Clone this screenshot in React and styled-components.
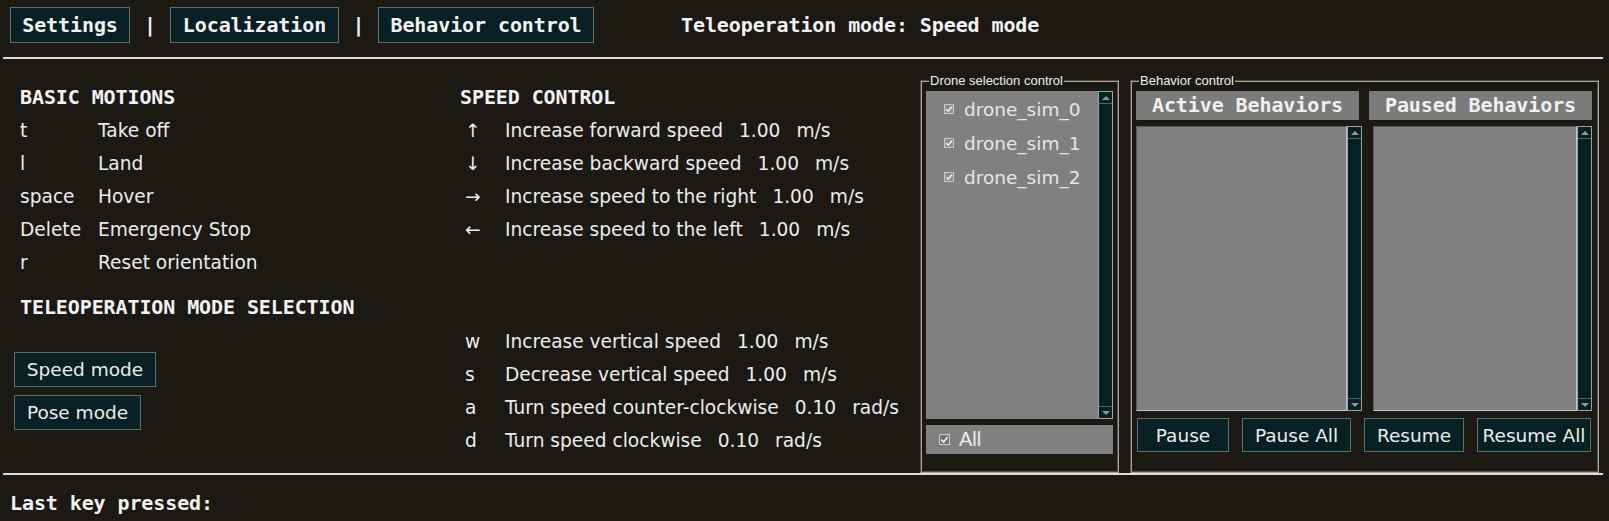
import React from "react";
import styled, { createGlobalStyle } from "styled-components";

const mono = `"DejaVu Sans Mono", "Liberation Mono", monospace`;
const sans = `"DejaVu Sans", "Liberation Sans", sans-serif`;

const GlobalStyle = createGlobalStyle`
  html, body {
    margin: 0;
    background: #1b1912;
  }
  body {
    font-family: ${sans};
    color: #ececec;
  }
`;

const Page = styled.div`
  width: 1609px;
  height: 521px;
  overflow: hidden;
  background: #1b1912;
`;

const TopBar = styled.header`
  display: flex;
  align-items: center;
  height: 36px;
  padding: 7px 0 0 10px;
`;

const TabButton = styled.button`
  box-sizing: border-box;
  width: ${(p) => p.$w}px;
  height: 36px;
  padding: 0;
  text-align: center;
  white-space: nowrap;
  background: #062024;
  border: 1px solid #5b7070;
  color: #f2f2f2;
  font-family: ${mono};
  font-weight: bold;
  font-size: 20px;
  letter-spacing: -0.1px;
`;

const Sep = styled.span`
  width: ${(p) => p.$w}px;
  text-align: center;
  font-family: ${mono};
  font-weight: bold;
  font-size: 20px;
  color: #f2f2f2;
`;

const ModeLabel = styled.span`
  margin-left: 87px;
  font-family: ${mono};
  font-weight: bold;
  font-size: 20px;
  letter-spacing: -0.1px;
  color: #f2f2f2;
`;

const Rule = styled.hr`
  height: 2px;
  border: 0;
  background: #dcdcdc;
  margin: ${(p) => p.$top}px 6px 0 3px;
`;

const Main = styled.main`
  display: flex;
  box-sizing: border-box;
  height: 414px;
  padding-left: 20px;
`;

const Column = styled.section`
  width: ${(p) => p.$w}px;
  padding-top: 22px;
`;

const Heading = styled.h3`
  margin: ${(p) => p.$top || 0}px 0 0;
  height: 33px;
  line-height: 33px;
  font-family: ${mono};
  font-weight: bold;
  font-size: 20px;
  letter-spacing: -0.1px;
  color: #f2f2f2;
`;

const Row = styled.div`
  display: flex;
  gap: 16px;
  height: 33px;
  line-height: 33px;
  font-size: 18.6px;
  white-space: nowrap;
  color: #ececec;
  padding-left: ${(p) => p.$pad || 0}px;
  margin-top: ${(p) => p.$top || 0}px;
`;

const Key = styled.span`
  width: ${(p) => p.$w}px;
  margin-right: -16px;
  flex: none;
`;

const ModeButtons = styled.div`
  display: flex;
  flex-direction: column;
  align-items: flex-start;
  gap: 8px;
  margin: 28px 0 0 -6px;
`;

const ModeButton = styled.button`
  box-sizing: border-box;
  width: ${(p) => p.$w}px;
  height: 35px;
  padding: 0;
  background: #062024;
  border: 1px solid #5b7070;
  color: #ececec;
  font-family: ${sans};
  font-size: 18.5px;
`;

const Frame = styled.fieldset`
  box-sizing: border-box;
  width: ${(p) => p.$w}px;
  margin: 15px 0 0 ${(p) => p.$ml || 0}px;
  padding: 3px 4px ${(p) => p.$pb}px;
  border: 2px groove #a4a4a4;
  min-width: 0;
`;

const Legend = styled.legend`
  margin-left: 3px;
  padding: 0 1px;
  line-height: 14px;
  font-family: "Liberation Sans", Arial, sans-serif;
  font-size: 13px;
  color: #f0f0f0;
`;

const ListBox = styled.div`
  display: flex;
  height: ${(p) => p.$h}px;
`;

const ListPane = styled.div`
  flex: 1;
  box-sizing: border-box;
  background: #808080;
  padding-top: 1px;
  border: ${(p) => (p.$sunken ? "1px solid" : "0")};
  border-color: #5c5c5c #c4c4c4 #c4c4c4 #5c5c5c;
`;

const Scrollbar = styled.div`
  box-sizing: border-box;
  width: 15px;
  display: flex;
  flex-direction: column;
  justify-content: space-between;
  background: #062024;
  border: 1px solid #93a5a5;
`;

const ScrollArrow = styled.div`
  height: 11px;
  display: flex;
  align-items: center;
  justify-content: center;
  border-${(p) => (p.$down ? "top" : "bottom")}: 1px solid #4d6565;

  &::after {
    content: "";
    border-left: 4px solid transparent;
    border-right: 4px solid transparent;
    border-${(p) => (p.$down ? "top" : "bottom")}: 4px solid #8c9c9c;
  }
`;

const CheckItem = styled.label`
  display: flex;
  align-items: center;
  gap: 10px;
  height: 34px;
  padding-left: 18px;
  font-size: 18.5px;
  color: #e6e6e6;
`;

const AllRow = styled.label`
  display: flex;
  align-items: center;
  gap: 9px;
  height: 29px;
  margin-top: 6px;
  padding-left: 13px;
  background: #808080;
  font-family: "Liberation Sans", Arial, sans-serif;
  font-size: 20px;
  color: #ececec;
`;

const Grid = styled.div`
  display: grid;
  grid-template-columns: ${(p) => p.$cols};
  column-gap: ${(p) => p.$gap}px;
  margin-top: ${(p) => p.$top || 0}px;
  padding-left: ${(p) => p.$pad || 0}px;
`;

const ColHeader = styled.div`
  height: 29px;
  line-height: 29px;
  text-align: center;
  background: #7b7b7b;
  font-family: ${mono};
  font-weight: bold;
  font-size: 20px;
  letter-spacing: -0.1px;
  color: #f0f0f0;
`;

const ActionButton = styled.button`
  box-sizing: border-box;
  height: 34px;
  padding: 0;
  white-space: nowrap;
  background: #062024;
  border: 1px solid #5b7070;
  color: #ececec;
  font-family: ${sans};
  font-size: 18.5px;
`;

const Footer = styled.footer`
  padding: 16px 0 0 10px;
  line-height: 24px;
  font-family: ${mono};
  font-weight: bold;
  font-size: 20px;
  letter-spacing: -0.1px;
  color: #f2f2f2;
`;

function CheckBox({ size = 10, fill = "#8e8e8e" }) {
  return (
    <svg width={size} height={size} viewBox="0 0 10 10">
      <rect x="0.5" y="0.5" width="9" height="9" fill={fill} stroke="#c8c8c8" />
      <path d="M2.2 5.2 L4.2 7.2 L7.9 2.8" fill="none" stroke="#f4f4f4" strokeWidth="1.5" />
    </svg>
  );
}

function Scroll() {
  return (
    <Scrollbar>
      <ScrollArrow />
      <ScrollArrow $down />
    </Scrollbar>
  );
}

const basic = [
  ["t", "Take off"],
  ["l", "Land"],
  ["space", "Hover"],
  ["Delete", "Emergency Stop"],
  ["r", "Reset orientation"],
];

const planar = [
  ["↑", "Increase forward speed", "1.00", "m/s"],
  ["↓", "Increase backward speed", "1.00", "m/s"],
  ["→", "Increase speed to the right", "1.00", "m/s"],
  ["←", "Increase speed to the left", "1.00", "m/s"],
];

const vertical = [
  ["w", "Increase vertical speed", "1.00", "m/s"],
  ["s", "Decrease vertical speed", "1.00", "m/s"],
  ["a", "Turn speed counter-clockwise", "0.10", "rad/s"],
  ["d", "Turn speed clockwise", "0.10", "rad/s"],
];

const drones = ["drone_sim_0", "drone_sim_1", "drone_sim_2"];

function SpeedRow({ row, top }) {
  const [key, label, value, unit] = row;
  return (
    <Row $pad={5} $top={top}>
      <Key $w={40}>{key}</Key>
      <span>{label}</span>
      <span>{value}</span>
      <span>{unit}</span>
    </Row>
  );
}

export default function App() {
  return (
    <Page>
      <GlobalStyle />
      <TopBar>
        <TabButton $w={120}>Settings</TabButton>
        <Sep $w={40}>|</Sep>
        <TabButton $w={169}>Localization</TabButton>
        <Sep $w={39}>|</Sep>
        <TabButton $w={216}>Behavior control</TabButton>
        <ModeLabel>Teleoperation mode: Speed mode</ModeLabel>
      </TopBar>
      <Rule $top={14} />

      <Main>
        <Column $w={440}>
          <Heading>BASIC MOTIONS</Heading>
          {basic.map(([k, d]) => (
            <Row key={k}>
              <Key $w={78}>{k}</Key>
              <span>{d}</span>
            </Row>
          ))}
          <Heading $top={12}>TELEOPERATION MODE SELECTION</Heading>
          <ModeButtons>
            <ModeButton $w={142}>Speed mode</ModeButton>
            <ModeButton $w={127}>Pose mode</ModeButton>
          </ModeButtons>
        </Column>

        <Column $w={460}>
          <Heading>SPEED CONTROL</Heading>
          {planar.map((r) => (
            <SpeedRow key={r[1]} row={r} />
          ))}
          {vertical.map((r, i) => (
            <SpeedRow key={r[1]} row={r} top={i === 0 ? 79 : 0} />
          ))}
        </Column>

        <Frame $w={199} $pb={2}>
          <Legend>Drone selection control</Legend>
          <ListBox $h={328}>
            <ListPane>
              {drones.map((d) => (
                <CheckItem key={d}>
                  <CheckBox />
                  {d}
                </CheckItem>
              ))}
            </ListPane>
            <Scroll />
          </ListBox>
          <AllRow>
            <CheckBox size={11} fill="#6e6e6e" />
            All
          </AllRow>
        </Frame>

        <Frame $w={469} $ml={11} $pb={4}>
          <Legend>Behavior control</Legend>
          <Grid $cols="223px 223px" $gap={10}>
            <ColHeader>Active Behaviors</ColHeader>
            <ColHeader>Paused Behaviors</ColHeader>
          </Grid>
          <Grid $cols="226px 219px" $gap={11} $top={6}>
            <ListBox $h={285}>
              <ListPane $sunken />
              <Scroll />
            </ListBox>
            <ListBox $h={285}>
              <ListPane $sunken />
              <Scroll />
            </ListBox>
          </Grid>
          <Grid $cols="92px 109px 100px 114px" $gap={13} $top={7} $pad={1}>
            <ActionButton>Pause</ActionButton>
            <ActionButton>Pause All</ActionButton>
            <ActionButton>Resume</ActionButton>
            <ActionButton>Resume All</ActionButton>
          </Grid>
        </Frame>
      </Main>

      <Rule $top={0} />
      <Footer>Last key pressed:</Footer>
    </Page>
  );
}
